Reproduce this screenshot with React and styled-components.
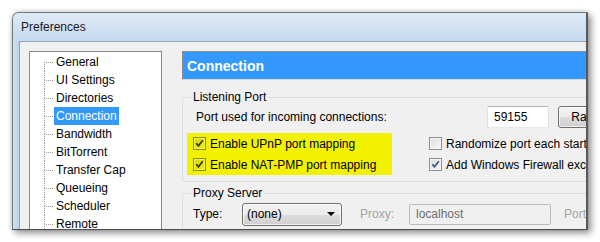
import React from 'react';
import styled, { createGlobalStyle } from 'styled-components';

const Global = createGlobalStyle`
  html, body { margin: 0; padding: 0; background: #fff; }
  body { font-family: "Liberation Sans", Arial, sans-serif; font-size: 12px; color: #000; }
  * { box-sizing: border-box; }
`;

const Stage = styled.div`
  width: 600px;
  height: 242px;
  padding: 12px 0 0 12px;
  overflow: hidden;
  background: #fff;
`;

const Window = styled.div`
  width: 576px;
  height: 218px;
  border: 1px solid #72777c;
  border-right: 2px solid #55595d;
  border-bottom-color: #4a4d50;
  border-top-left-radius: 7px;
  box-shadow: 3px 3px 7px rgba(0, 0, 0, 0.45), -1px -1px 4px rgba(0, 0, 0, 0.12);
  overflow: hidden;
  display: flex;
  flex-direction: column;
  background: #c4d9ef;
`;

const TitleBar = styled.div`
  height: 28px;
  flex: none;
  display: flex;
  align-items: center;
  padding-left: 8px;
  background: linear-gradient(#dde9f6, #c6daf0);
  color: #1a1a1a;
  font-size: 12px;
`;

const Body = styled.div`
  flex: 1;
  display: flex;
  min-height: 0;
`;

const Frame = styled.div`
  width: 6px;
  flex: none;
  background: linear-gradient(90deg, #cfe0f2, #bcd3ec);
`;

const Client = styled.div`
  flex: 1;
  min-width: 0;
  background: #f0f0f0;
  border-top: 1px solid #8ea3bc;
  border-left: 1px solid #8ea3bc;
  display: flex;
  align-items: flex-start;
  gap: 20px;
  padding: 9px 0 0 9px;
  overflow: hidden;
`;

const Tree = styled.div`
  width: 133px;
  height: 200px;
  flex: none;
  background: #fff;
  border: 1px solid #828790;
  padding-top: 1px;
  display: flex;
  flex-direction: column;
`;

const TreeRow = styled.div`
  height: 18px;
  display: flex;
  align-items: center;
`;

const Branch = styled.span`
  width: 9px;
  height: 18px;
  margin-left: 14px;
  flex: none;
  display: flex;
  flex-direction: column;
`;

const BranchTop = styled.span`
  height: 9px;
  border-left: 1px dotted ${(p) => (p.$first ? 'transparent' : '#9a9a9a')};
`;

const BranchBottom = styled.span`
  flex: 1;
  border-left: 1px dotted #9a9a9a;
  border-top: 1px dotted #9a9a9a;
`;

const TreeLabel = styled.span`
  margin-left: 1px;
  height: 18px;
  line-height: 18px;
  padding: 0 2px;
  background: ${(p) => (p.$selected ? '#3399ff' : 'transparent')};
  color: ${(p) => (p.$selected ? '#fff' : '#000')};
  white-space: nowrap;
`;

const Panel = styled.div`
  width: 480px;
  flex: none;
  display: flex;
  flex-direction: column;
`;

const Header = styled.div`
  height: 29px;
  background: #3399ff;
  border: 1px solid;
  border-color: #8d8d8d #dadada #dadada #8d8d8d;
  color: #fff;
  font-weight: bold;
  font-size: 14px;
  display: flex;
  align-items: center;
  padding-left: 4px;
`;

const Group = styled.fieldset`
  margin: ${(p) => p.$top}px 0 0 0;
  min-width: 0;
  border: 1px solid #d5dfe5;
  border-radius: 3px;
  padding: ${(p) => p.$padTop}px 0 6px 4px;
`;

const Legend = styled.legend`
  margin-left: 4px;
  padding: 0 2px;
  line-height: 14px;
  font-size: 12px;
`;

const PortRow = styled.div`
  height: 22px;
  display: flex;
  align-items: center;
  padding-left: 9px;
`;

const PortLabel = styled.span`
  width: 291px;
  flex: none;
`;

const TextInput = styled.div`
  width: ${(p) => p.$w}px;
  height: ${(p) => p.$h}px;
  flex: none;
  display: flex;
  align-items: center;
  padding-left: ${(p) => p.$pad}px;
  background: ${(p) => (p.$disabled ? '#f0f0f0' : '#fff')};
  color: ${(p) => (p.$disabled ? '#6d6d6d' : '#000')};
  border: 1px solid;
  border-color: ${(p) => (p.$disabled ? '#b8bcbf' : '#abadb3 #dbdfe6 #e3e9ef #e2e3ea')};
  border-radius: 2px;
`;

const Button = styled.div`
  width: 72px;
  height: 22px;
  flex: none;
  margin-left: 9px;
  display: flex;
  align-items: center;
  justify-content: center;
  border: 1px solid #707070;
  border-radius: 3px;
  background: linear-gradient(#f2f2f2 0%, #ebebeb 50%, #dddddd 51%, #cfcfcf 100%);
  box-shadow: inset 0 0 0 1px rgba(255, 255, 255, 0.7);
`;

const CheckGrid = styled.div`
  margin-top: 5px;
  display: flex;
`;

const CheckColumn = styled.div`
  width: ${(p) => (p.$w ? `${p.$w}px` : 'auto')};
  flex: none;
  margin-left: ${(p) => p.$ml || 0}px;
  padding-left: ${(p) => p.$pl || 0}px;
  background: ${(p) => (p.$highlight ? '#f2f200' : 'transparent')};
  display: flex;
  flex-direction: column;
`;

const CheckRow = styled.label`
  height: 21px;
  display: flex;
  align-items: center;
  gap: 4px;
  white-space: nowrap;
`;

const Box = styled.span`
  width: 13px;
  height: 13px;
  flex: none;
  border: 1px solid ${(p) => (p.$tint ? '#8c8c30' : '#8f8f8f')};
  background: ${(p) =>
    p.$tint
      ? 'linear-gradient(135deg, #d6d600, #f0f000)'
      : 'linear-gradient(135deg, #dcdcdc, #f8f8f8)'};
  box-shadow: inset 0 0 0 1px ${(p) => (p.$tint ? '#f4f444' : '#f4f4f4')};
  display: flex;
  align-items: center;
  justify-content: center;
`;

const FieldRow = styled.div`
  height: 22px;
  display: flex;
  align-items: center;
  padding-left: 6px;
`;

const FieldLabel = styled.span`
  width: 49px;
  flex: none;
  margin-left: ${(p) => p.$ml || 0}px;
  color: ${(p) => (p.$disabled ? '#a3a3a3' : '#000')};
`;

const Select = styled.div`
  width: 100px;
  height: 23px;
  flex: none;
  display: flex;
  align-items: center;
  justify-content: space-between;
  padding: 0 6px 0 4px;
  border: 1px solid #707070;
  border-radius: 3px;
  background: linear-gradient(#f2f2f2 0%, #ebebeb 50%, #dddddd 51%, #cfcfcf 100%);
  box-shadow: inset 0 0 0 1px rgba(255, 255, 255, 0.7);
`;

const Arrow = styled.span`
  width: 0;
  height: 0;
  border-left: 4px solid transparent;
  border-right: 4px solid transparent;
  border-top: 4px solid #000;
`;

function Checkbox({ checked, tint, label }) {
  return (
    <CheckRow>
      <Box $tint={tint}>
        {checked && (
          <svg width="9" height="9" viewBox="0 0 9 9">
            <path
              d="M1.3 4.3 L3.4 6.8 L7.8 1.2"
              fill="none"
              stroke={tint ? '#2e3a10' : '#3b5290'}
              strokeWidth="1.7"
            />
          </svg>
        )}
      </Box>
      <span>{label}</span>
    </CheckRow>
  );
}

const items = [
  'General',
  'UI Settings',
  'Directories',
  'Connection',
  'Bandwidth',
  'BitTorrent',
  'Transfer Cap',
  'Queueing',
  'Scheduler',
  'Remote',
  'Advanced',
];

export default function App() {
  return (
    <>
      <Global />
      <Stage>
        <Window>
          <TitleBar>Preferences</TitleBar>
          <Body>
            <Frame />
            <Client>
              <Tree>
                {items.map((it, i) => (
                  <TreeRow key={it}>
                    <Branch>
                      <BranchTop $first={i === 0} />
                      <BranchBottom />
                    </Branch>
                    <TreeLabel $selected={it === 'Connection'}>{it}</TreeLabel>
                  </TreeRow>
                ))}
              </Tree>
              <Panel>
                <Header>Connection</Header>
                <Group $top={10} $padTop={2}>
                  <Legend>Listening Port</Legend>
                  <PortRow>
                    <PortLabel>Port used for incoming connections:</PortLabel>
                    <TextInput $w={62} $h={22} $pad={6}>59155</TextInput>
                    <Button>Random</Button>
                  </PortRow>
                  <CheckGrid>
                    <CheckColumn $highlight $w={205} $pl={6}>
                      <Checkbox checked tint label="Enable UPnP port mapping" />
                      <Checkbox checked tint label="Enable NAT-PMP port mapping" />
                    </CheckColumn>
                    <CheckColumn $ml={37}>
                      <Checkbox label="Randomize port each start" />
                      <Checkbox checked label="Add Windows Firewall exception" />
                    </CheckColumn>
                  </CheckGrid>
                </Group>
                <Group $top={4} $padTop={3}>
                  <Legend>Proxy Server</Legend>
                  <FieldRow>
                    <FieldLabel>Type:</FieldLabel>
                    <Select>
                      <span>(none)</span>
                      <Arrow />
                    </Select>
                    <FieldLabel $ml={18} $disabled>
                      Proxy:
                    </FieldLabel>
                    <TextInput $w={142} $h={21} $pad={6} $disabled>
                      localhost
                    </TextInput>
                    <FieldLabel $ml={13} $disabled>
                      Port:
                    </FieldLabel>
                  </FieldRow>
                </Group>
              </Panel>
            </Client>
          </Body>
        </Window>
      </Stage>
    </>
  );
}
